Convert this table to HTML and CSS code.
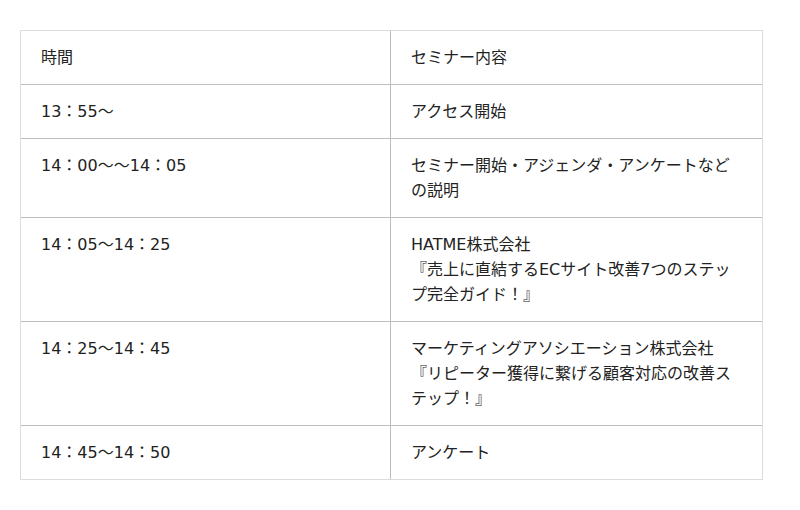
FILE: index.html
```html
<!DOCTYPE html>
<html lang="ja">
<head>
<meta charset="utf-8">
<link rel="stylesheet" href="styles.css">
</head>
<body>
<div class="page">
<table class="schedule">
<colgroup><col class="c1"><col class="c2"></colgroup>
<tbody>
<tr class="row-head"><td>時間</td><td>セミナー内容</td></tr>
<tr><td>13：55〜</td><td>アクセス開始</td></tr>
<tr><td>14：00〜〜14：05</td><td>セミナー開始・アジェンダ・アンケートなどの説明</td></tr>
<tr><td>14：05〜14：25</td><td>HATME株式会社<br>『売上に直結するECサイト改善7つのステップ完全ガイド！』</td></tr>
<tr><td>14：25〜14：45</td><td>マーケティングアソシエーション株式会社<br>『リピーター獲得に繋げる顧客対応の改善ステップ！』</td></tr>
<tr class="row-last"><td>14：45〜14：50</td><td>アンケート</td></tr>
</tbody>
</table>
</div>
</body>
</html>
```

FILE: styles.css
```css
html, body {
  margin: 0;
  padding: 0;
  background: #ffffff;
}
.page {
  padding: 30px 0 0 20px;
}
.schedule {
  width: 743px;
  border-collapse: collapse;
  table-layout: fixed;
  font-family: "DejaVu Sans", "Noto Sans CJK JP", sans-serif;
  font-size: 16px;
  line-height: 25px;
  color: #222222;
  border: 1px solid #dcdcdc;
}
.schedule .c1 { width: 370px; }
.schedule .c2 { width: 372px; }
.schedule td {
  vertical-align: top;
  padding: 14px 20px 14px 20px;
  border-top: 1px solid #bdbdbd;
  border-left: 1px solid #bdbdbd;
}
.schedule td:first-child {
  border-left: 1px solid #dcdcdc;
}
.schedule td:last-child {
  border-right: 1px solid #dcdcdc;
}
.schedule .row-head td {
  border-top: 1px solid #dcdcdc;
}
.schedule .row-last td {
  border-bottom: 1px solid #dcdcdc;
}
```
